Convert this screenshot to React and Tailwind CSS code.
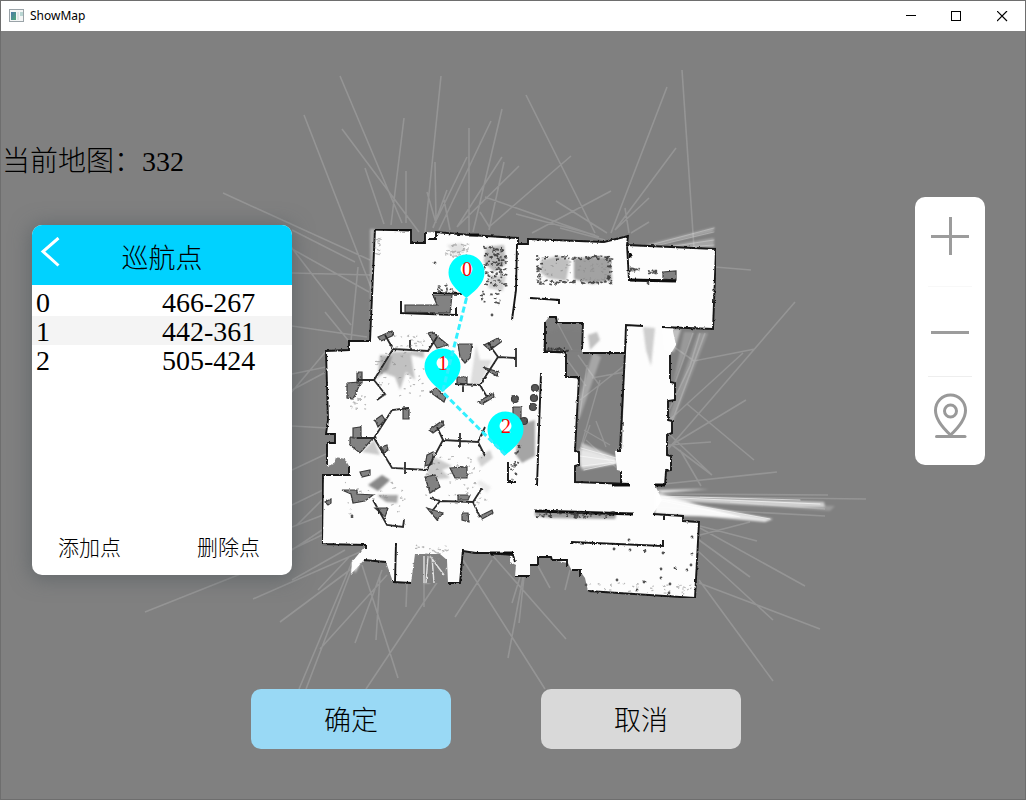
import React from "react";

const WAYPOINTS = [
  { id: 0, x: 466, y: 267 },
  { id: 1, x: 442, y: 361 },
  { id: 2, x: 505, y: 424 },
];

const FLOOR =
  "M375 229L411 230V243H425V232L470 235L518 239V244H528V239L604 242L628 236L627 245L716 249L713 329L672 327L676 345L670 355V382L675 383V400L668 401V420L672 421V433L667 435V455L671 456V470L666 471L665 485H655L662 500L653 514L683 516V521L699 522L695 598L588 591L585 578L580 571H572L568 563L552 560L551 557H538V565H530V576H515L516 565L510 562V554L463 551L460 583H448L447 560L440 554H415L411 583L393 582L386 562L364 560L351 574L352 562L366 545L322 544L323 475H349V466H327V443H335V435H326L328 420L326 351L349 350V341H370Z";

const COURTYARD =
  "M545 322L549 317H556L557 323H583L582 352L625 353L622 450L615 451L617 470L621 471V484L575 482V465L579 464V452L575 451L579 379L565 377L566 354L543 352Z";

const WALLS = [
  "M375 229L411 230V243H425V232M428 239H436V232L470 235L518 238V244H528V239L604 242L628 236L627 245L716 249L713 329L662 327M643 326L626 325L625 353M627 245L629 280L676 281M375 229L370 341H349V350L326 351L328 420L326 434H335V443H327V465M349 466V475H323L322 544L366 545V549M364 560L386 562M396 543L395 582M393 582L411 583M448 583L460 583L463 549",
  "M463 551L475 553H490L513 555L515 562M515 576H530M530 565H538V557H551L552 560H567V567M572 570H580V577M588 591L695 598L699 522L683 521V516L653 514M664 516V520",
  "M670 355V382L675 383V400L668 401V420L672 421V433L667 435V455L671 456V470L666 471L665 485",
  "M545 322V352M549 317H556L557 323H583L582 350M583 353L625 353L620 450M543 352H566V377H579L575 451L579 452V465L575 466V482L630 484M617 451H621M621 471V484",
  "M517 244L516 290L512 320M530 298L559 300V304M541 373L537 485M508 462V482H516M572 544V542L663 546V541",
  "M401 301V313L456 315V307M432 293L465 294",
];

const THICK_WALLS = "M612 485H630M655 485H665M535 511L633 514M375 229L411 230M630 280L676 281M470 235H478M490 553H513M630 253V258";

const PARTITIONS =
  "M393 349L428 351L437 337M393 349L385 335M393 349L374 380H357M374 380L385 394L377 400M410 341V350M455 384L480 385L498 357L516 358M516 348V367M498 357L488 343M480 385L487 397M463 384V392M409 408L392 410L374 438H357M374 438L392 468L427 470L443 440L478 442L485 427M478 442L485 456M443 440L437 427M460 433V448M373 500L387 525L403 527L404 520M440 501L473 502L482 488M473 502L480 517M430 498L440 501L433 510M405 462V474";

const DESKS = [
  "378,337 392,331 394,335 381,341",
  "428,333 432,332 448,345 437,348",
  "347,383 361,382 353,399 347,398",
  "357,372 362,372 362,383 357,383",
  "430,392 436,388 446,397 444,402",
  "458,344 472,344 470,358 465,363 460,357",
  "484,345 498,338 501,342 490,350",
  "478,402 493,393 494,397 482,404",
  "483,367 498,372 497,376 490,372",
  "457,377 467,377 467,384 457,383",
  "403,408 409,408 409,419 403,419",
  "375,420 382,415 385,420 378,427",
  "350,437 373,438 360,453 350,445",
  "353,428 361,427 361,438 353,438",
  "429,430 442,421 444,425 433,433",
  "450,468 467,467 467,478 455,478",
  "425,477 435,475 440,487 430,493",
  "360,472 370,470 370,475 362,477",
  "342,490 357,490 357,494 373,495 365,501 353,503 351,494",
  "375,508 388,508 385,517",
  "427,508 443,513 437,520",
  "458,495 470,495 468,500 458,500",
  "462,513 468,513 469,522 462,520",
  "480,516 492,510 493,513 482,519",
  "427,455 433,452 432,464 425,466",
  "381,447 387,445 388,450 384,453",
  "663,272 676,271 676,280 663,279",
  "405,305 437,305 433,295 452,295 450,313 405,312",
  "513,407 521,407 521,420 513,420",
  "325,502 331,499 331,503 328,505",
];

const ALCOVES = ["325,435 335,435 335,443 325,443", "324,467 334,464 336,457 345,459 349,466 349,475 324,475"];

const SHADES = [
  ["392,352 374,380 384,373 395,377 400,390 406,372 415,380 411,355 424,358 424,351", 0.4],
  ["470,386 476,345 480,360 492,360 480,384", 0.22],
  ["380,355 392,356 388,370 378,375", 0.5],
  ["368,485 382,475 390,480 378,491", 0.8],
  ["377,495 398,495 397,503 386,502", 0.6],
  ["374,440 380,455 362,452", 0.35],
  ["427,470 434,457 452,466 442,470 450,478 430,480", 0.35],
  ["477,458 490,450 493,458 481,467", 0.3],
  ["477,483 480,480 491,487 487,493", 0.12],
  ["518,425 535,420 535,456 522,463 516,455", 0.6],
  ["535,511 617,513 615,519 552,518 535,516", 0.65],
  ["545,334 560,328 582,330 582,350 545,350", 0.15],
  ["643,327 655,328 651,366 646,350", 0.32],
  ["486,247 504,245 506,264 494,272 484,262", 0.45],
  ["490,275 506,276 503,291 488,288", 0.3],
  ["447,245 462,243 465,251 455,255", 0.18],
  ["541,260 558,256 570,260 566,281 548,278 540,272", 0.42],
  ["574,258 610,257 612,280 592,284 574,279", 0.62],
  ["588,335 597,332 600,340 590,350", 0.4],
];

const RAYS =
  "M340 76L402 223M304 115L372 290M342 129L419 232M365 168L384 224M404 118L391 225M406 171V223M441 76L425 233M427 192L436 223M435 162L436 220M469 128V232M467 157L433 227M491 121L439 230M502 109L473 232M502 157L457 227M504 162L489 230M519 166L457 227M526 95L595 233M571 156L489 227M611 191L532 233M556 201L607 233M485 197L599 237M516 214L595 235M560 228L605 240M667 87L611 233M676 148L615 230M649 198L615 230M682 70L694 248M625 208L629 233M649 222L631 233M480 212L490 228M223 193L370 260M447 190L433 228M444 200L450 230" +
  "M145 612L238 575L322 535M253 599L360 552M280 622L370 555M299 689L352 562M306 689L356 558M366 689L452 560M320 649L387 575M355 643L382 570M398 678L362 565M376 640L380 575M406 607L407 583M424 607V560M455 617L492 560M545 689L463 560M566 639L493 556M508 658L523 577M519 623L524 577M512 603L520 577M773 681L699 580M820 629L699 583M805 586L700 528M750 577L699 540M773 620L699 552M757 541L700 526M550 588L538 566M565 590L570 570" +
  "M715 267L751 270M663 455L795 302M665 424L743 353M755 349L694 361L674 347M663 450L746 400M668 445L711 442M668 433L710 473M672 445L712 475M687 404L754 460M668 412L690 366L700 333M669 430L705 333M675 383L693 333M664 484L777 472M680 450L701 486M655 494L828 495M700 497L866 499M655 507L825 516M730 502L825 509M700 535L750 522" +
  "M285 239L351 325M292 273L370 275M285 245L369 292M292 326L367 337M358 267L351 341M292 374L326 367M285 400L327 350M292 426L327 428M292 470L326 454M292 505L323 490M292 527L323 515M297 525L322 500M325 312L352 345M292 390L326 372M292 230L355 262M292 550L322 530M292 580L345 550M318 590L350 556M250 250L292 268";

const COURT_RAYS =
  "M578 355L600 386M587 365L579 420M600 380L580 450M580 400L625 365M590 425L577 460M596 421L606 447M586 440L619 470M560 350L586 386M584 430L610 445M556 320L572 350M592 378L625 372";

const BRIGHT = [
  ["578,402 593,352 601,357 579,420", 0.3],
  ["580,460 582,443 616,457 617,464 582,470", 0.6],
  ["579,449 590,451 616,459 616,464 580,467", 0.5],
  ["645,245 715,227 713,232 655,246", 0.3],
  ["660,247 714,238 714,248", 0.3],
  ["655,490 709,489 662,493", 0.8],
  ["655,496 824,502 825,507 800,507 655,500", 0.6],
  ["655,497 773,519 765,522 700,516 655,513", 0.8],
  ["660,499 835,506 830,511 700,502", 0.2],
  ["655,492 740,517 683,516 655,514", 0.8],
  ["662,329 681,329 674,352 664,350", 0.5],
  ["684,332 694,332 672,388", 0.2],
  ["698,333 708,333 670,430 668,420", 0.2],
  ["668,452 671,448 755,350 665,455", 0.3],
  ["352,562 366,552 355,573", 0.8],
  ["425,553 432,555 430,583 424,583", 0.6],
  ["370,229 375,229 371,345", 0.4],
];

/* Small deterministic generator, so that the scan speckle is stable between renders. */
function speckle(seed, count, x, y, w, h, ring) {
  let s = seed;
  const next = () => {
    s = (s * 16807) % 2147483647;
    return s / 2147483647;
  };
  let d = "";
  for (let i = 0; i < count; i++) {
    let px = next();
    let py = next();
    if (ring) {
      if (next() < 0.65) py = py < 0.5 ? py * 0.25 : 1 - (1 - py) * 0.25;
      else px = px < 0.5 ? px * 0.12 : 1 - (1 - px) * 0.12;
    }
    const len = 1 + next() * 2;
    d += `M${(x + px * w).toFixed(1)} ${(y + py * h).toFixed(1)}l${len.toFixed(1)} ${(next() * 2 - 1).toFixed(1)}`;
  }
  return d;
}

const DARK_SPECKLE =
  speckle(11, 120, 536, 256, 75, 28, true) +
  speckle(23, 55, 483, 246, 22, 24, false) +
  speckle(37, 34, 485, 270, 20, 16, false) +
  speckle(41, 16, 480, 290, 20, 13, false) +
  speckle(53, 16, 437, 285, 16, 8, false) +
  speckle(67, 45, 536, 512, 78, 6, false) +
  speckle(71, 26, 508, 420, 10, 60, false) +
  speckle(83, 20, 546, 348, 20, 3, false) +
  speckle(97, 14, 629, 268, 10, 4, false) +
  speckle(101, 10, 648, 270, 8, 4, false);

const FAINT_SPECKLE =
  speckle(7, 60, 536, 258, 74, 24, false) +
  speckle(13, 35, 445, 243, 22, 14, false) +
  speckle(17, 45, 376, 350, 60, 48, false) +
  speckle(19, 50, 425, 455, 60, 50, false) +
  speckle(29, 16, 350, 395, 16, 14, false) +
  speckle(31, 30, 345, 480, 60, 35, false) +
  speckle(43, 34, 588, 583, 104, 13, false) +
  speckle(47, 16, 374, 235, 6, 20, false) +
  speckle(59, 30, 415, 545, 32, 14, false) +
  speckle(61, 20, 395, 335, 30, 14, false);

const DOTS = [
  [614, 549], [630, 550], [645, 551], [663, 553], [692, 537], [692, 554], [687, 570], [691, 565],
  [617, 580], [644, 582], [670, 584], [661, 569], [675, 568], [661, 578], [637, 590], [629, 540],
  [435, 263], [352, 516], [586, 585], [669, 593], [648, 283], [492, 315],
];

const CHAIRS = [[535, 388], [534, 398], [533, 407], [515, 399], [524, 421]];

function FloorPlan() {
  return (
    <svg
      className="absolute inset-0 h-full w-full"
      viewBox="1 31 1024 768"
      preserveAspectRatio="xMidYMid slice"
      role="img"
      aria-label="332"
    >
      <defs>
        <filter id="rough" x="0" y="0" width="100%" height="100%">
          <feTurbulence type="fractalNoise" baseFrequency="0.35" numOctaves="2" seed="4" result="n" />
          <feDisplacementMap in="SourceGraphic" in2="n" scale="2.500" xChannelSelector="R" yChannelSelector="G" />
          <feGaussianBlur stdDeviation="0.400" />
        </filter>
        <filter id="soft" x="-5%" y="-5%" width="110%" height="110%">
          <feGaussianBlur stdDeviation="1" />
        </filter>
        <clipPath id="court">
          <path d={COURTYARD} />
        </clipPath>
      </defs>
      <path d={RAYS} fill="none" stroke="#b4b4b4" strokeOpacity="0.4" strokeWidth="1.600" />
      <g filter="url(#rough)">
        <path d={FLOOR} fill="#fdfdfd" />
        <path d={COURTYARD} fill="#808080" />
      </g>
      <g clipPath="url(#court)">
        <path d={COURT_RAYS} fill="none" stroke="#b4b4b4" strokeOpacity="0.4" strokeWidth="1.400" />
      </g>
      <g fill="#ffffff" filter="url(#soft)">
        {BRIGHT.map(([points, opacity]) => (
          <polygon key={points} points={points} fillOpacity={opacity} />
        ))}
      </g>
      <g fill="none" stroke="#ffffff" strokeLinecap="round">
        <path d="M655 497L820 504M655 498L770 519M655 496L800 500M657 500L740 517" strokeOpacity="0.6" />
        <path d="M581 448L616 458M580 456L616 461M582 466L616 462M584 470L616 463" strokeOpacity="0.55" />
        <path d="M650 245L714 228M655 246L714 232M668 247L714 240M672 248L714 245" strokeOpacity="0.25" />
      </g>
      <g filter="url(#soft)">
        {SHADES.map(([points, opacity]) => (
          <polygon key={points} points={points} fill="#6a6a6a" fillOpacity={opacity} />
        ))}
      </g>
      <g filter="url(#rough)">
        <polygon points="415,583 415,558 422,554 434,554 443,558 447,583" fill="#808080" />
        <g fill="#808080">
          {ALCOVES.map((points) => (
            <polygon key={points} points={points} />
          ))}
        </g>
        <path d="M424 556V583M428 556L426 583M432 557L434 583M430 556L444 575" stroke="#e2e2e2" strokeWidth="1.400" />
        <g fill="#828282" stroke="#3c3c3c" strokeWidth="1.200">
          {DESKS.map((points) => (
            <polygon key={points} points={points} />
          ))}
          {CHAIRS.map(([x, y]) => (
            <circle key={`${x}-${y}`} cx={x} cy={y} r="3.500" fill="#555555" />
          ))}
        </g>
        <path d={PARTITIONS} fill="none" stroke="#2c2c2c" strokeWidth="1.800" />
        <path d={WALLS.join("")} fill="none" stroke="#161616" strokeWidth="1.900" />
        <path d={THICK_WALLS} fill="none" stroke="#101010" strokeWidth="2.800" />
        <path d={FAINT_SPECKLE} fill="none" stroke="#8a8a8a" strokeOpacity="0.6" strokeWidth="1.200" />
        <path d={DARK_SPECKLE} fill="none" stroke="#333333" strokeOpacity="0.85" strokeWidth="1.600" />
        {DOTS.map(([x, y]) => (
          <circle key={`${x}-${y}`} cx={x} cy={y} r="1.400" fill="#555555" />
        ))}
      </g>

      {WAYPOINTS.map(({ id, x, y }) => (
        <g key={id} transform={`translate(${x} ${y})`}>
          <path d="M0.500 31C-4 27-17.500 18-17.500 5.500A18 18 0 0 1 18.500 5.500C18.500 18 5 27 0.500 31Z" fill="#00ffff" />
          <circle cx="0.500" cy="2" r="6" fill="#ffffff" />
        </g>
      ))}
      <path
        d={"M" + WAYPOINTS.map(({ x, y }) => `${x + 0.5} ${y + 31}`).join("L")}
        fill="none"
        stroke="#32f0ff"
        strokeWidth="3"
        strokeDasharray="6 3"
      />
      {WAYPOINTS.map(({ id, x, y }) => (
        <text
          key={id}
          x={x + 1}
          y={y + 9}
          textAnchor="middle"
          fill="#ff0000"
          className="font-['Liberation_Serif','Noto_Sans_CJK_SC',serif] text-[20px]"
        >
          {id}
        </text>
      ))}
    </svg>
  );
}

function TitleBar() {
  return (
    <header className="flex h-[30px] items-center justify-between bg-white font-['Noto_Sans','Open_Sans',sans-serif]">
      <div className="flex items-center gap-[6px] pl-2">
        <svg className="h-[14px] w-[15px]" viewBox="0 0 15 14" aria-hidden="true">
          <defs>
            <linearGradient id="pane" x1="0" y1="0" x2="1" y2="1">
              <stop offset="0" stopColor="#4a78a8" />
              <stop offset="1" stopColor="#4fa878" />
            </linearGradient>
          </defs>
          <rect x="0.500" y="0.500" width="14" height="12" fill="#f4f6f6" stroke="#9aa3a8" />
          <rect x="2" y="3" width="5" height="8" fill="url(#pane)" />
          <rect x="8" y="3" width="2" height="8" fill="#dfe6e6" />
          <rect x="11" y="3" width="3" height="4" fill="#b9d6d3" />
        </svg>
        <h1 className="text-[12px] leading-4 text-black">ShowMap</h1>
      </div>
      <div className="flex h-full">
        <button type="button" aria-label="Minimize" className="flex w-[46px] items-center justify-center">
          <svg className="h-[11px] w-[11px]" viewBox="0 0 11 11">
            <path d="M0 4.500H10" stroke="#000" />
          </svg>
        </button>
        <button type="button" aria-label="Maximize" className="flex w-[45px] items-center justify-center">
          <svg className="h-[11px] w-[11px]" viewBox="0 0 11 11">
            <rect x="0.500" y="0.500" width="9" height="9" fill="none" stroke="#000" />
          </svg>
        </button>
        <button type="button" aria-label="Close" className="flex w-[46px] items-center justify-center">
          <svg className="h-[11px] w-[11px]" viewBox="0 0 11 11">
            <path d="M0 0L10 10M10 0L0 10" stroke="#000" strokeWidth="1.200" />
          </svg>
        </button>
      </div>
    </header>
  );
}

function WaypointPanel() {
  return (
    <section className="flex h-[350px] w-[260px] flex-col overflow-hidden rounded-[10px] bg-white shadow-[0_2px_20px_2px_rgba(70,80,85,0.5)]">
      <div className="grid h-[60px] shrink-0 grid-cols-[40px_1fr_40px] bg-[#00d2ff]">
        <button type="button" aria-label="Back" className="flex items-start pt-3 pl-2">
          <svg className="h-[30px] w-5" viewBox="0 0 20 30" fill="none" stroke="#fff" strokeWidth="3">
            <path d="M18.500 1L3 14.500L18.500 28.500" />
          </svg>
        </button>
        <h3 className="pt-[14px] text-center text-[27px] leading-10 font-light">巡航点</h3>
      </div>
      <div className="pt-[2px]">
        <table className="w-full border-collapse text-[28px] leading-[27px]">
          <tbody>
            {WAYPOINTS.map(({ id, x, y }) => (
              <tr key={id} className="even:bg-[#f4f4f4]">
                <td className="w-1/2 p-0 pt-[2px] pl-1">{id}</td>
                <td className="w-1/2 p-0 pt-[2px]">
                  {x}-{y}
                </td>
              </tr>
            ))}
          </tbody>
        </table>
      </div>
      <div className="mt-auto flex justify-between pr-8 pb-3 pl-[26px] text-[21px] leading-[30px] font-light">
        <button type="button">添加点</button>
        <button type="button">删除点</button>
      </div>
    </section>
  );
}

function ZoomTools() {
  return (
    <div className="flex h-[268px] w-[70px] flex-col items-center rounded-[10px] bg-white">
      <button type="button" aria-label="Zoom in" className="flex h-[89px] w-full items-start justify-center pt-5">
        <svg className="h-10 w-10" viewBox="0 0 40 40" stroke="#9c9c9c" strokeWidth="3">
          <path d="M1 19.500H39M20.500 0V38" />
        </svg>
      </button>
      <hr className="w-11 border-[#f8f8f8]" />
      <button type="button" aria-label="Zoom out" className="flex h-[89px] w-full items-center justify-center">
        <svg className="h-10 w-10" viewBox="0 0 40 40" stroke="#9c9c9c" strokeWidth="3">
          <path d="M1 20.500H39" />
        </svg>
      </button>
      <hr className="w-11 border-[#eeeeee]" />
      <button type="button" aria-label="Locate" className="flex w-full flex-1 items-start justify-center pt-4">
        <svg
          className="h-[46px] w-9"
          viewBox="0 0 36 46"
          fill="none"
          stroke="#999999"
          strokeWidth="3"
          strokeLinecap="round"
          strokeLinejoin="round"
        >
          <path d="M18.500 42C12 36 3.500 27 3.500 17.500A15 15.500 0 0 1 33.500 17.500C33.500 27 25 36 18.500 42Z" />
          <circle cx="18.500" cy="18" r="6" />
          <path d="M4.500 43.500H33" />
        </svg>
      </button>
    </div>
  );
}

export default function App() {
  return (
    <div className="flex min-h-screen flex-col border border-[#6e6e6e] bg-[#808080] font-['Liberation_Serif','Noto_Sans_CJK_SC',serif] text-black">
      <TitleBar />
      <main className="relative flex flex-1 flex-col">
        <FloorPlan />
        <div className="relative flex flex-1 flex-col">
          <h2 className="mt-[111px] pl-px text-[28px] leading-10 font-light">当前地图：332</h2>
          <div className="mt-[15px] flex items-start justify-between pr-10 pl-[31px]">
            <div className="pt-7">
              <WaypointPanel />
            </div>
            <ZoomTools />
          </div>
          <div className="mt-auto flex justify-center gap-[90px] pr-[34px] pb-[50px] text-[27px] font-light">
            <button type="button" className="h-[60px] w-[200px] rounded-[10px] bg-[#99d9f5] pt-1">
              确定
            </button>
            <button type="button" className="h-[60px] w-[200px] rounded-[10px] bg-[#d9d9d9] pt-1">
              取消
            </button>
          </div>
        </div>
      </main>
    </div>
  );
}
